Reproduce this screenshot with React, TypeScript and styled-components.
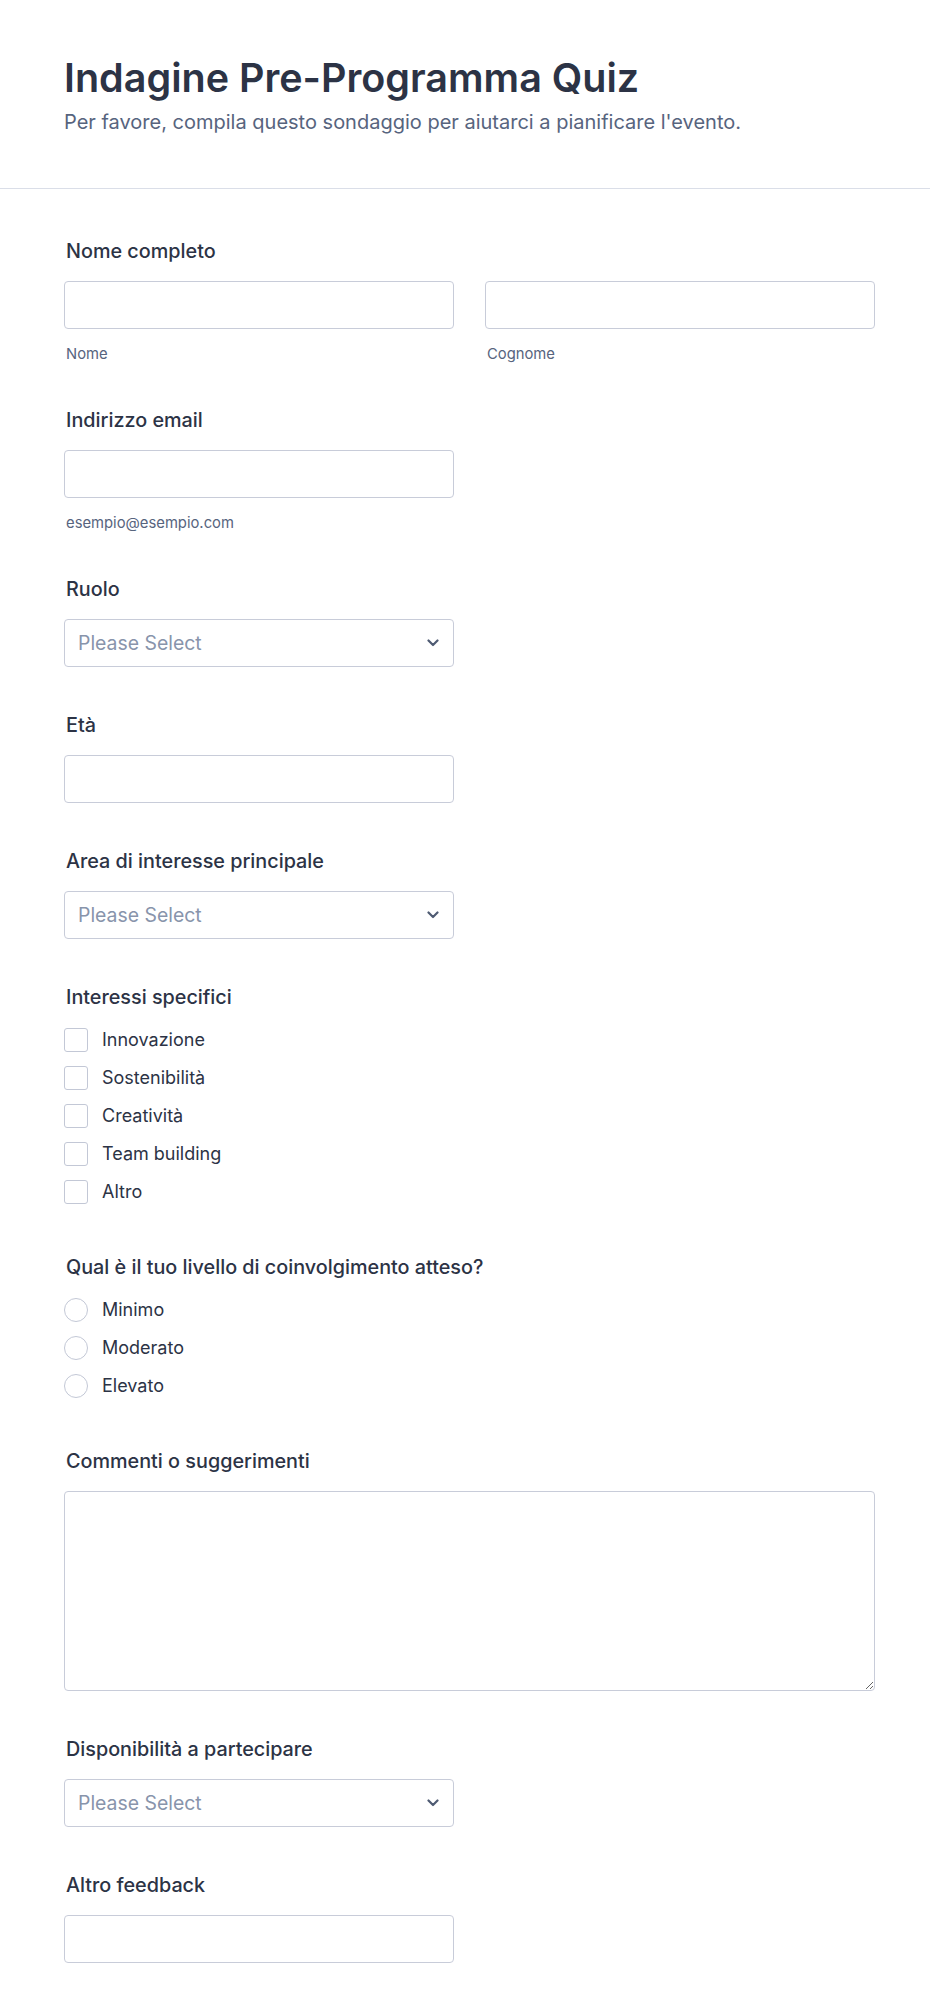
import React from 'react';
import styled, { createGlobalStyle } from 'styled-components';

const GlobalStyle = createGlobalStyle`
  body {
    margin: 0;
    background: #ffffff;
    font-family: Inter, "Noto Sans", sans-serif;
    color: #2c3345;
  }
`;

const Page = styled.div`
  width: 930px;
  min-height: 1994px;
  background: #ffffff;
`;

const Header = styled.header`
  padding: 54px 55px 52px 64px;
  border-bottom: 1px solid #dadee8;
`;

const Title = styled.h1`
  margin: 0;
  font-size: 39.5px;
  line-height: 48px;
  font-weight: 600;
  color: #2c3345;
`;

const Subtitle = styled.p`
  margin: 6px 0 0;
  font-size: 20px;
  line-height: 28px;
  color: #57647e;
`;

const Form = styled.form`
  padding: 50px 55px 0 64px;
  display: flex;
  flex-direction: column;
  gap: 46px;
`;

const Field = styled.div`
  display: flex;
  flex-direction: column;
`;

const Label = styled.label`
  margin: 0 0 18px 2px;
  font-size: 19.8px;
  line-height: 24px;
  font-weight: 500;
  color: #2c3345;
`;

const Row = styled.div`
  display: grid;
  grid-template-columns: 390px 390px;
  column-gap: 31px;
`;

const Column = styled.div`
  display: flex;
  flex-direction: column;
`;

const TextInput = styled.input`
  box-sizing: border-box;
  width: 390px;
  height: 48px;
  padding: 0 12px;
  border: 1px solid #c8ccd9;
  border-radius: 4px;
  background: #ffffff;
  font-family: inherit;
  font-size: 18px;
  color: #2c3345;
  outline: none;
`;

const SubLabel = styled.span`
  margin: 15px 0 -2px 2px;
  font-size: 14.8px;
  line-height: 20px;
  color: #57647e;
`;

const SelectBox = styled.div`
  box-sizing: border-box;
  width: 390px;
  height: 48px;
  padding: 0 14px 0 13px;
  border: 1px solid #c8ccd9;
  border-radius: 4px;
  display: flex;
  align-items: center;
  justify-content: space-between;
  background: #ffffff;
`;

const Placeholder = styled.span`
  font-size: 19.4px;
  color: #8894ab;
`;

const TextArea = styled.textarea`
  box-sizing: border-box;
  width: 811px;
  height: 200px;
  padding: 10px 12px;
  border: 1px solid #c8ccd9;
  border-radius: 4px;
  font-family: inherit;
  font-size: 18px;
  color: #2c3345;
  outline: none;
  resize: both;
`;

const Options = styled.div`
  display: flex;
  flex-direction: column;
  gap: 14px;
  padding-bottom: 5px;
  margin-top: 1px;
`;

const Option = styled.label`
  display: flex;
  align-items: center;
  gap: 14px;
  font-size: 18px;
  line-height: 24px;
  color: #2c3345;
`;

const Mark = styled.span<{ $round?: boolean }>`
  box-sizing: border-box;
  width: 24px;
  height: 24px;
  flex: none;
  border: 1px solid #c3c8d6;
  border-radius: ${p => (p.$round ? '50%' : '3px')};
  background: #ffffff;
`;

const Chevron = () => (
  <svg width="12" height="8" viewBox="0 0 12 8" fill="none">
    <path d="M1.5 1.5L6 6L10.5 1.5" stroke="#4f5b73" strokeWidth="2.2" strokeLinecap="round" strokeLinejoin="round" />
  </svg>
);

const Select: React.FC = () => (
  <SelectBox>
    <Placeholder>Please Select</Placeholder>
    <Chevron />
  </SelectBox>
);

const interests = ['Innovazione', 'Sostenibilità', 'Creatività', 'Team building', 'Altro'];
const levels = ['Minimo', 'Moderato', 'Elevato'];

const App: React.FC = () => (
  <Page>
    <GlobalStyle />
    <Header>
      <Title>Indagine Pre-Programma Quiz</Title>
      <Subtitle>Per favore, compila questo sondaggio per aiutarci a pianificare l'evento.</Subtitle>
    </Header>
    <Form>
      <Field>
        <Label>Nome completo</Label>
        <Row>
          <Column>
            <TextInput />
            <SubLabel>Nome</SubLabel>
          </Column>
          <Column>
            <TextInput />
            <SubLabel>Cognome</SubLabel>
          </Column>
        </Row>
      </Field>
      <Field>
        <Label>Indirizzo email</Label>
        <TextInput />
        <SubLabel>esempio@esempio.com</SubLabel>
      </Field>
      <Field>
        <Label>Ruolo</Label>
        <Select />
      </Field>
      <Field>
        <Label>Età</Label>
        <TextInput />
      </Field>
      <Field>
        <Label>Area di interesse principale</Label>
        <Select />
      </Field>
      <Field>
        <Label>Interessi specifici</Label>
        <Options>
          {interests.map(item => (
            <Option key={item}>
              <Mark />
              {item}
            </Option>
          ))}
        </Options>
      </Field>
      <Field>
        <Label>Qual è il tuo livello di coinvolgimento atteso?</Label>
        <Options>
          {levels.map(item => (
            <Option key={item}>
              <Mark $round />
              {item}
            </Option>
          ))}
        </Options>
      </Field>
      <Field>
        <Label>Commenti o suggerimenti</Label>
        <TextArea />
      </Field>
      <Field>
        <Label>Disponibilità a partecipare</Label>
        <Select />
      </Field>
      <Field>
        <Label>Altro feedback</Label>
        <TextInput />
      </Field>
    </Form>
  </Page>
);

export default App;
